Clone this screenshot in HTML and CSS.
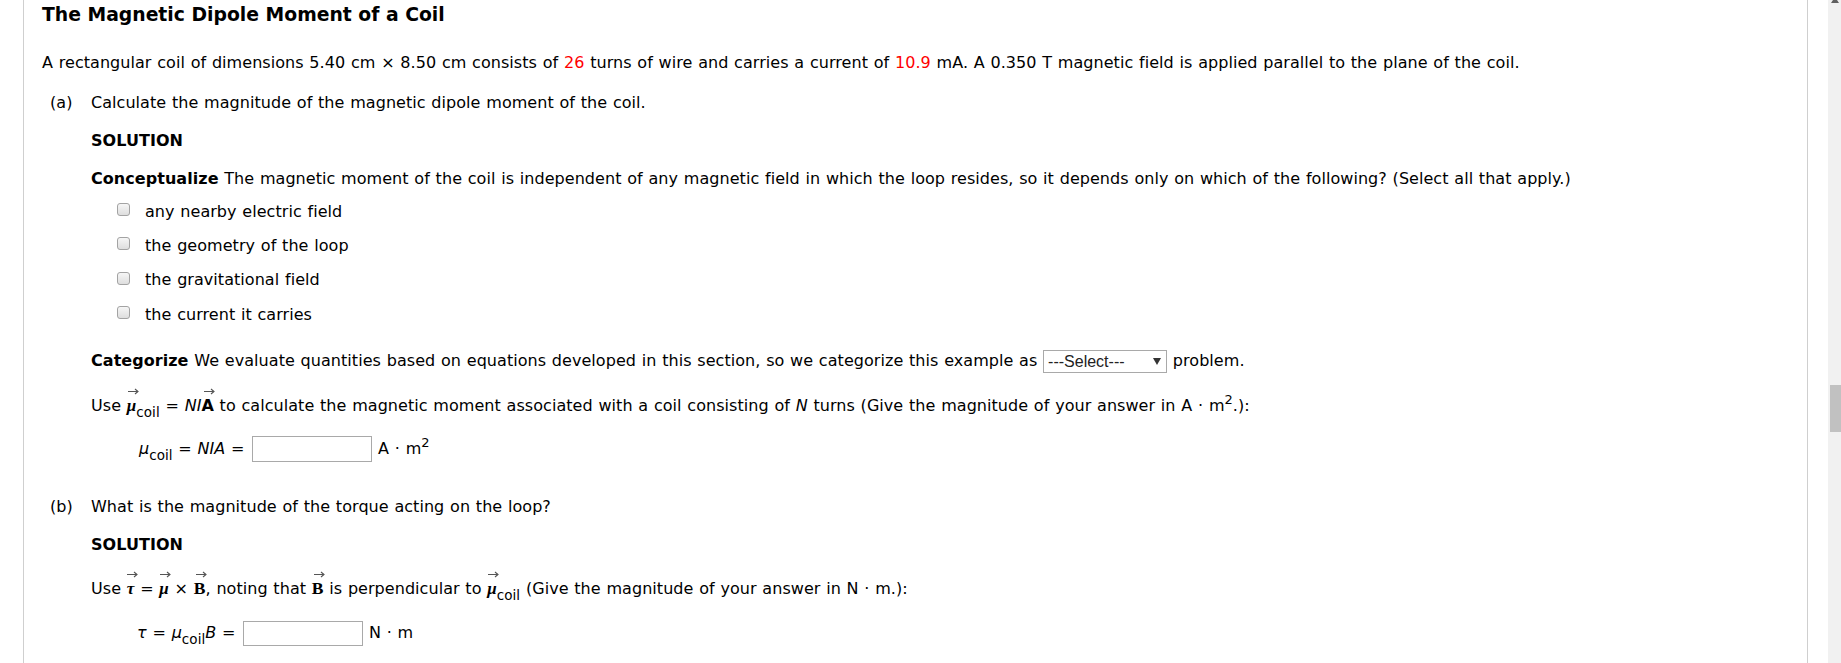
FILE: index.html
```html
<!DOCTYPE html>
<html lang="en">
<head>
<meta charset="utf-8">
<title>The Magnetic Dipole Moment of a Coil</title>
<link rel="stylesheet" href="styles.css">
</head>
<body>
<div class="window">
  <div class="page">
    <h1 class="title">The Magnetic Dipole Moment of a Coil</h1>
    <p class="intro">A rectangular coil of dimensions 5.40 cm × 8.50 cm consists of <span class="red">26</span> turns of wire and carries a current of <span class="red">10.9</span> mA. A 0.350 T magnetic field is applied parallel to the plane of the coil.</p>

    <div class="part part-a">
      <div class="label">(a)</div>
      <div class="part-body">
        <p class="question">Calculate the magnitude of the magnetic dipole moment of the coil.</p>
        <p class="solution">SOLUTION</p>
        <p class="step concept"><b>Conceptualize</b> The magnetic moment of the coil is independent of any magnetic field in which the loop resides, so it depends only on which of the following? (Select all that apply.)</p>
        <ul class="options">
          <li><input type="checkbox" class="check"><span>any nearby electric field</span></li>
          <li><input type="checkbox" class="check"><span>the geometry of the loop</span></li>
          <li><input type="checkbox" class="check"><span>the gravitational field</span></li>
          <li><input type="checkbox" class="check"><span>the current it carries</span></li>
        </ul>
        <p class="step categorize"><b>Categorize</b> We evaluate quantities based on equations developed in this section, so we categorize this example as <span class="select"><span class="select-text">---Select---</span><svg class="caret" width="8" height="7" viewBox="0 0 8 7"><polygon points="0,0 8,0 4,7" fill="#333"/></svg></span> problem.</p>
        <p class="step use-mu">Use <span class="vec"><span class="bmu">μ</span><svg class="arrow" width="11" height="7" viewBox="0 0 11 7"><path d="M0 3.5H10M7 1L10 3.5L7 6" fill="none" stroke="#555" stroke-width="1.1"/></svg></span><sub>coil</sub> = <i>NI</i><span class="vec"><b>A</b><svg class="arrow" width="11" height="7" viewBox="0 0 11 7"><path d="M0 3.5H10M7 1L10 3.5L7 6" fill="none" stroke="#555" stroke-width="1.1"/></svg></span> to calculate the magnetic moment associated with a coil consisting of <i>N</i> turns (Give the magnitude of your answer in A · m<sup>2</sup>.):</p>
        <p class="formula formula-mu"><i>μ</i><sub>coil</sub> = <i>NIA</i> = <input type="text" class="answer"> A · m<sup>2</sup></p>
      </div>
    </div>

    <div class="part part-b">
      <div class="label">(b)</div>
      <div class="part-body">
        <p class="question">What is the magnitude of the torque acting on the loop?</p>
        <p class="solution">SOLUTION</p>
        <p class="step use-tau">Use <span class="vec"><span class="btau">τ</span><svg class="arrow" width="11" height="7" viewBox="0 0 11 7"><path d="M0 3.5H10M7 1L10 3.5L7 6" fill="none" stroke="#555" stroke-width="1.1"/></svg></span> = <span class="vec"><span class="bmu">μ</span><svg class="arrow" width="11" height="7" viewBox="0 0 11 7"><path d="M0 3.5H10M7 1L10 3.5L7 6" fill="none" stroke="#555" stroke-width="1.1"/></svg></span> × <span class="vec"><span class="bB">B</span><svg class="arrow" width="11" height="7" viewBox="0 0 11 7"><path d="M0 3.5H10M7 1L10 3.5L7 6" fill="none" stroke="#555" stroke-width="1.1"/></svg></span>, noting that <span class="vec"><span class="bB">B</span><svg class="arrow" width="11" height="7" viewBox="0 0 11 7"><path d="M0 3.5H10M7 1L10 3.5L7 6" fill="none" stroke="#555" stroke-width="1.1"/></svg></span> is perpendicular to <span class="vec"><span class="bmu">μ</span><svg class="arrow" width="11" height="7" viewBox="0 0 11 7"><path d="M0 3.5H10M7 1L10 3.5L7 6" fill="none" stroke="#555" stroke-width="1.1"/></svg></span><sub>coil</sub> (Give the magnitude of your answer in N · m.):</p>
        <p class="formula formula-tau"><i>τ</i> = <i>μ</i><sub>coil</sub><i>B</i> = <input type="text" class="answer answer-tau"> N · m</p>
      </div>
    </div>
  </div>
  <div class="scrollbar">
    <span class="scroll-up"></span>
    <span class="thumb"></span>
  </div>
</div>
</body>
</html>
```

FILE: styles.css
```css
html, body {
  margin: 0;
  padding: 0;
  overflow: hidden;
  background: #ffffff;
}

body {
  font-family: "DejaVu Sans", Verdana, sans-serif;
  font-size: 16px;
  line-height: 20px;
  color: #000;
  word-spacing: 0.6px;
  letter-spacing: 0.05px;
}

.window {
  display: flex;
  height: 663px;
}

.page {
  box-sizing: border-box;
  width: 1785px;
  margin-left: 23px;
  height: 663px;
  border-left: 1px solid #cfcfcf;
  border-right: 1px solid #cfcfcf;
  padding: 3px 0 0 18px;
}

.title {
  margin: 0;
  font-size: 18.8px;
  line-height: 24px;
  font-weight: bold;
  word-spacing: 0;
  letter-spacing: 0;
}

p {
  margin: 0;
}

.intro {
  margin-top: 25.5px;
}

.red {
  color: #ff0000;
}

.part {
  display: grid;
  grid-template-columns: 49px 1fr;
}

.part-a {
  margin-top: 20px;
}

.part-b {
  margin-top: 38px;
}

.label {
  padding-left: 8px;
}

.solution {
  margin-top: 18px;
  font-weight: bold;
}

.concept {
  margin-top: 18px;
}

.options {
  list-style: none;
  margin: 13px 0 0 0;
  padding: 0;
  display: flex;
  flex-direction: column;
  gap: 14.35px;
}

.options li {
  display: flex;
  align-items: flex-start;
  padding-left: 26px;
  height: 20px;
}

.check {
  appearance: none;
  -webkit-appearance: none;
  box-sizing: border-box;
  width: 13px;
  height: 13px;
  margin: 1.5px 15px 0 0;
  border: 1px solid #a3a3a3;
  border-radius: 3px;
  background: linear-gradient(#f6f6f6, #dedede);
}

.categorize {
  margin-top: 26px;
}

.select {
  display: inline-flex;
  align-items: center;
  justify-content: space-between;
  box-sizing: border-box;
  width: 124px;
  height: 23px;
  margin: -2px 0;
  padding: 0 5px 0 4px;
  border: 1px solid #a9a9a9;
  background: #fff;
  vertical-align: middle;
  font-family: "Liberation Sans", Arial, sans-serif;
  font-size: 16px;
  line-height: 21px;
  color: #222;
  word-spacing: 0;
  letter-spacing: 0;
}

.caret {
  display: block;
}

.use-mu {
  margin-top: 25px;
}

.vec {
  position: relative;
}

.arrow {
  position: absolute;
  left: 50%;
  top: -8px;
  margin-left: -4px;
}

.bmu, .btau {
  font-family: "Liberation Serif", "Times New Roman", serif;
  font-weight: bold;
  font-style: italic;
  font-size: 17px;
}

.bB {
  font-family: "Liberation Serif", "Times New Roman", serif;
  font-weight: bold;
  font-size: 17.5px;
}

sub {
  font-size: 13.5px;
  vertical-align: -6px;
  line-height: 0;
}

sup {
  font-size: 13px;
  vertical-align: 7px;
  line-height: 0;
}

.formula {
  padding-left: 48px;
  margin-top: 23px;
}

.answer {
  box-sizing: border-box;
  width: 120px;
  height: 26px;
  margin: -3px 0 -3px 2px;
  padding: 0 4px;
  border: 1px solid #a9a9a9;
  background: #fff;
  vertical-align: middle;
  font: inherit;
}

.answer-tau {
  height: 25px;
}

.use-tau {
  margin-top: 23px;
}

.formula-tau {
  margin-top: 24px;
  padding-left: 46px;
}

.scrollbar {
  position: relative;
  width: 13px;
  margin-left: 20px;
  height: 663px;
  background: #f1f1f1;
}

.thumb {
  position: absolute;
  left: 2px;
  right: 0;
  top: 385px;
  height: 47px;
  background: #c1c1c1;
}

.scroll-up {
  position: absolute;
  top: -3px;
  left: 3px;
  width: 0;
  height: 0;
  border-left: 4px solid transparent;
  border-right: 4px solid transparent;
  border-bottom: 6px solid #606060;
}
```
